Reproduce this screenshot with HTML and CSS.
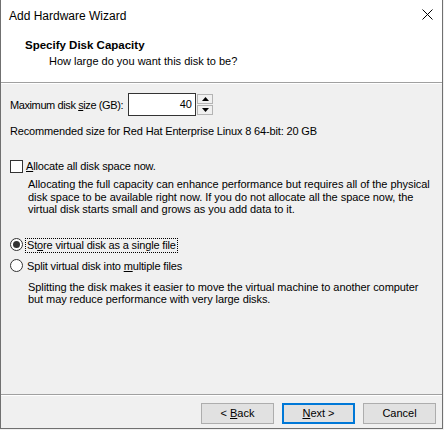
FILE: index.html
```html
<!DOCTYPE html>
<html>
<head>
<meta charset="utf-8">
<link rel="stylesheet" href="styles.css">
</head>
<body>
<div class="window">
  <div class="titlebar">
    <span class="title">Add Hardware Wizard</span>
    <svg class="close" width="11" height="11" viewBox="0 0 11 11"><path d="M0.5 0.5 L10.5 10.5 M10.5 0.5 L0.5 10.5" stroke="#000" stroke-width="1" fill="none"/></svg>
  </div>
  <div class="header">
    <div class="h-title">Specify Disk Capacity</div>
    <div class="h-sub">How large do you want this disk to be?</div>
  </div>
  <div class="content">
    <div class="size-row">
      <span class="size-label">Maximum disk <u>s</u>ize (GB):</span>
      <div class="num-box">40</div>
      <div class="spin">
        <span class="spin-btn"><svg width="7" height="4" viewBox="0 0 7 4"><path d="M3.5 0 L7 4 L0 4 Z" fill="#000"/></svg></span>
        <span class="spin-btn"><svg width="7" height="4" viewBox="0 0 7 4"><path d="M0 0 L7 0 L3.5 4 Z" fill="#000"/></svg></span>
      </div>
    </div>
    <p class="rec">Recommended size for Red Hat Enterprise Linux 8 64-bit: 20 GB</p>
    <div class="opt opt-check">
      <span class="checkbox"></span>
      <span class="opt-label"><u>A</u>llocate all disk space now.</span>
    </div>
    <p class="desc desc-alloc">Allocating the full capacity can enhance performance but requires all of the physical<br>disk space to be available right now. If you do not allocate all the space now, the<br>virtual disk starts small and grows as you add data to it.</p>
    <div class="opt opt-radio1">
      <span class="radio checked"></span>
      <span class="opt-label focus">St<u>o</u>re virtual disk as a single file</span>
    </div>
    <div class="opt opt-radio2">
      <span class="radio"></span>
      <span class="opt-label">Split virtual disk into <u>m</u>ultiple files</span>
    </div>
    <p class="desc desc-split">Splitting the disk makes it easier to move the virtual machine to another computer<br>but may reduce performance with very large disks.</p>
  </div>
  <div class="footer">
    <button class="btn">&lt; <u>B</u>ack</button>
    <button class="btn default"><u>N</u>ext &gt;</button>
    <button class="btn">Cancel</button>
  </div>
</div>
</body>
</html>
```

FILE: styles.css
```css
html, body {
  margin: 0;
  padding: 0;
  background: #f0f0f0;
}

body {
  font-family: "Liberation Sans", Arial, sans-serif;
  font-size: 11px;
  color: #000;
}

.window {
  width: 443px;
  height: 429px;
  box-sizing: border-box;
  border-left: 1px solid #707070;
  border-right: 1px solid #707070;
  border-bottom: 1px solid #707070;
  background: #f0f0f0;
  display: flex;
  flex-direction: column;
}

.titlebar {
  height: 30px;
  box-sizing: border-box;
  background: #fff;
  display: flex;
  justify-content: space-between;
  align-items: flex-start;
  padding: 8px 9px 0 8px;
}

.title {
  font-size: 12px;
  line-height: 16px;
}

.close {
  display: block;
  margin-top: 1px;
}

.header {
  height: 53px;
  box-sizing: border-box;
  background: #fff;
  padding: 8px 0 0 24px;
  border-bottom: 1px solid #a0a0a0;
}

.h-title {
  font-weight: bold;
  font-size: 11.5px;
  line-height: 15px;
}

.h-sub {
  margin: 2px 0 0 24px;
  line-height: 13px;
}

.content {
  flex: 1;
  border-top: 1px solid #fff;
  padding: 9px 9px 0 9px;
}

.size-row {
  display: flex;
  align-items: center;
  height: 23px;
}

.size-label {
  width: 118px;
  line-height: 13px;
  padding-top: 2px;
  white-space: nowrap;
  letter-spacing: -0.4px;
}

.num-box {
  width: 68px;
  height: 23px;
  box-sizing: border-box;
  border: 1px solid #333;
  background: #fff;
  text-align: right;
  padding: 4px 3px 0 0;
  line-height: 13px;
}

.spin {
  width: 16px;
  height: 21px;
  display: flex;
  flex-direction: column;
  gap: 1px;
  margin-left: 1px;
}

.spin-btn {
  flex: 1;
  box-sizing: border-box;
  border: 1px solid #b4b4b4;
  background: #f0f0f0;
  display: flex;
  align-items: center;
  justify-content: center;
}

.spin-btn svg {
  display: block;
}

.rec {
  margin: 9px 0 0 0;
  line-height: 13px;
  white-space: nowrap;
  letter-spacing: -0.15px;
}

.opt {
  display: flex;
  align-items: center;
  white-space: nowrap;
}

.opt-label {
  line-height: 13px;
}

.opt-check {
  margin-top: 22px;
}

.opt-check .opt-label {
  margin-left: 3px;
  letter-spacing: -0.15px;
}

.checkbox {
  width: 13px;
  height: 13px;
  box-sizing: border-box;
  border: 1px solid #333;
  background: #fff;
  margin-top: -1px;
}

.desc {
  margin: 5px 0 0 18px;
  line-height: 12.5px;
  white-space: nowrap;
}

.desc-alloc {
  letter-spacing: -0.05px;
}

.radio {
  width: 13px;
  height: 13px;
  box-sizing: border-box;
  border: 1px solid #333;
  border-radius: 50%;
  background: #fff;
  display: flex;
  align-items: center;
  justify-content: center;
  margin-top: -1px;
}

.radio.checked::after {
  content: "";
  width: 7px;
  height: 7px;
  border-radius: 50%;
  background: #333;
}

.opt-radio1 {
  margin-top: 22px;
}

.opt-radio2 {
  margin-top: 6px;
}

.opt-radio1 .opt-label,
.opt-radio2 .opt-label {
  margin-left: 2px;
  padding: 0 1px;
  border: 1px dotted transparent;
  letter-spacing: -0.15px;
}

.opt-label.focus {
  border-color: #000;
}

.desc-split {
  margin-top: 7px;
  letter-spacing: -0.07px;
}

.footer {
  height: 34px;
  box-sizing: border-box;
  border-top: 1px solid #a0a0a0;
  box-shadow: inset 0 1px 0 #fff;
  padding: 8px 6px 0 0;
  display: flex;
  justify-content: flex-end;
  align-items: flex-start;
  gap: 8px;
}

.btn {
  width: 73px;
  height: 21px;
  box-sizing: border-box;
  margin: 0;
  padding: 0;
  border: 1px solid #adadad;
  background: #e1e1e1;
  font-family: "Liberation Sans", Arial, sans-serif;
  font-size: 11px;
  line-height: 13px;
  color: #000;
}

.btn.default {
  border: 2px solid #0078d7;
}
```
